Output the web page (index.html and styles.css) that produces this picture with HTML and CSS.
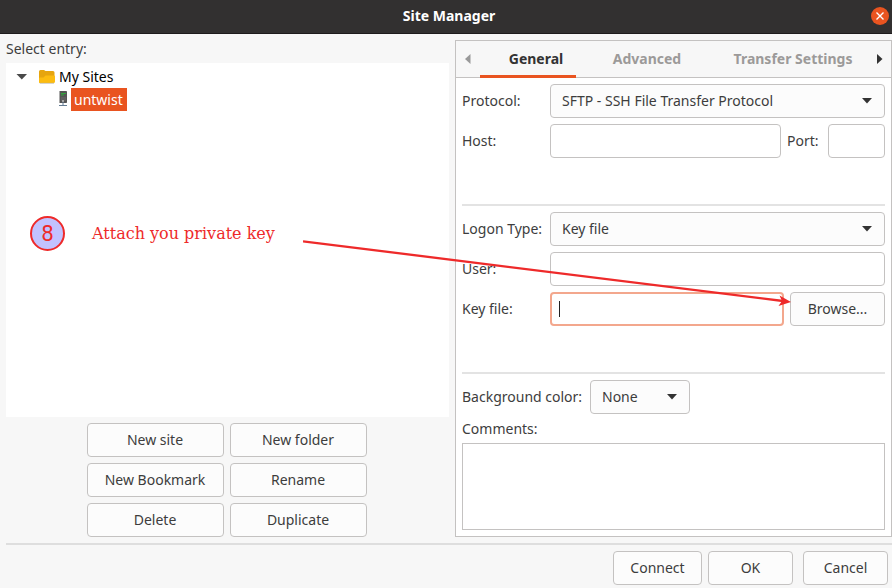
FILE: index.html
```html
<!DOCTYPE html>
<html lang="en">
<head>
<meta charset="utf-8">
<title>Site Manager</title>
<link rel="stylesheet" href="styles.css">
</head>
<body>
<header class="titlebar">
  <h1>Site Manager</h1>
  <button class="close" aria-label="Close">
    <svg viewBox="0 0 18 18" width="18" height="18"><circle cx="9" cy="9" r="9" fill="#e95420"/><path d="M5.500 5.500l7 7M12.500 5.500l-7 7" stroke="#fff" stroke-width="1.400"/></svg>
  </button>
</header>
<main class="columns">
  <section class="entries">
    <h2 class="caption">Select entry:</h2>
    <ul class="tree">
      <li class="node">
        <svg class="twisty" viewBox="0 0 11 6" width="11" height="6"><path d="M.5 0h10.500L5.800 5.500z" fill="#4a4a4a"/></svg>
        <svg class="folder" viewBox="0 0 16 14" width="16" height="14"><path d="M0 1.500Q0 0 1.500 0h3.500l1.500 1h7.500q1.500 0 1.500 1.500V12H0z" fill="#e6a50f"/><path d="M0 12.500V8.500q0-1 1.200-1H4.500L6.500 5.500H15q1 0 1 1v5q0 1.500-1.500 1.500h-13Q0 13 0 12.500z" fill="#fcbc11"/><path d="M.8 13.300h14.200" stroke="#b9b1a0" stroke-width=".7"/></svg>
        <span>My Sites</span>
      </li>
      <li class="node child">
        <svg class="server" viewBox="0 0 10 16" width="10" height="16"><rect x="1" y="0" width="8" height="12" rx=".8" fill="#555"/><path d="M1.500 0v12" stroke="#aaa"/><path d="M3 2.500h5M3 4h3" stroke="#31a53b"/><path d="M3 7h5M3 9h5" stroke="#777" stroke-width=".7"/><path d="M5 11v4M1 14.500h8" stroke="#637b91"/><path d="M5 9v2" stroke="#eee"/></svg>
        <span class="selected">untwist</span>
      </li>
    </ul>
    <div class="actions">
      <button>New site</button><button>New folder</button>
      <button>New Bookmark</button><button>Rename</button>
      <button>Delete</button><button>Duplicate</button>
    </div>
  </section>
  <section class="panel">
    <nav class="tabs" role="tablist">
      <button class="scroll" aria-label="Previous tab" disabled><svg viewBox="0 0 6 10" width="6" height="10"><path d="M5.500 0v10L0 5z" fill="#999"/></svg></button>
      <button class="tab active" role="tab" aria-selected="true">General</button>
      <button class="tab" role="tab">Advanced</button>
      <button class="tab" role="tab">Transfer Settings</button>
      <button class="scroll" aria-label="Next tab"><svg viewBox="0 0 6 10" width="6" height="10"><path d="M0 0v10L5.500 5z" fill="#333"/></svg></button>
    </nav>
    <form class="form">
      <div class="group">
        <label for="protocol">Protocol:</label>
        <select id="protocol"><option>SFTP - SSH File Transfer Protocol</option></select>
        <label for="host">Host:</label>
        <div class="pair">
          <input id="host" type="text">
          <label for="port" class="port-label">Port:</label>
          <input id="port" class="port" type="text">
        </div>
      </div>
      <hr>
      <div class="group">
        <label for="logon">Logon Type:</label>
        <select id="logon"><option>Key file</option></select>
        <label for="user">User:</label>
        <input id="user" type="text">
        <label for="keyfile">Key file:</label>
        <div class="pair">
          <input id="keyfile" class="focused" type="text">
          <button type="button" class="browse">Browse...</button>
        </div>
      </div>
      <hr>
      <div class="pair">
        <label for="color" class="wide">Background color:</label>
        <select id="color" class="color"><option>None</option></select>
      </div>
      <div class="comments">
        <label for="comments">Comments:</label>
        <textarea id="comments"></textarea>
      </div>
    </form>
  </section>
</main>
<footer class="footer">
  <button class="connect">Connect</button>
  <button>OK</button>
  <button class="cancel">Cancel</button>
</footer>
<div class="note">
  <span class="step">8</span>
  <span>Attach you private key</span>
</div>
<svg class="arrow" viewBox="0 0 490 70" width="490" height="70"><path d="M0 5.300L480 65" stroke="#ee2a2a" stroke-width="2.300"/><path d="M488 66L475.500 70L479 65L476.500 59.500z" fill="#ee2a2a"/></svg>
</body>
</html>
```
FILE: styles.css
```css
* { box-sizing: border-box; }
body {
  margin: 0;
  min-height: 100vh;
  display: flex;
  flex-direction: column;
  position: relative;
  background: #f7f7f7;
  color: #3d3d3d;
  font: 14px/20px "Noto Sans", sans-serif;
}
h1, h2, ul { margin: 0; padding: 0; font-size: inherit; }
svg { display: block; fill: none; }
button, input, select, textarea {
  font: inherit;
  color: inherit;
  margin: 0;
  border: 1px solid #c4c2c1;
  border-radius: 4px;
  background: #fcfcfc;
  height: 34px;
  min-width: 0;
}
input, textarea { background: #fff; outline: none; }
button { padding: 0; }
.titlebar {
  display: grid;
  grid-template-columns: 30px 1fr 24px;
  align-items: center;
  height: 34px;
  padding-bottom: 2px;
  background: #323030;
  border-bottom: 1px solid #1e1b1c;
  color: #fff;
}
.titlebar h1 { grid-column: 2; text-align: center; font-weight: 700; }
.close {
  display: grid;
  place-items: center;
  height: 30px;
  border: 0;
  background: none;
}
.columns {
  flex: 1;
  display: grid;
  grid-template-columns: 443fr 437fr;
  gap: 6px;
  padding: 6px 0 6px 6px;
}
.entries { display: flex; flex-direction: column; }
.caption { font-weight: 400; line-height: 18px; margin-bottom: 5px; }
.tree {
  flex: 1;
  list-style: none;
  background: #fff;
  color: #000;
  padding: 2px 10px;
}
.node { display: flex; align-items: center; height: 23px; }
.folder { margin: 0 4px 0 12px; }
.child { padding-left: 42px; }
.server { margin: 0 3px 2px 0; }
.selected { background: #e95420; color: #fff; padding: 0 4px 0 3px; line-height: 23px; }
.actions {
  display: grid;
  grid-template-columns: 137px 137px;
  justify-content: center;
  gap: 6px;
  padding: 6px 2px 0 0;
}
.panel {
  display: flex;
  flex-direction: column;
  border: 1px solid #c4c2c1;
  background: #fff;
}
.tabs {
  display: grid;
  grid-template-columns: 24px 96fr 142fr 150fr 23px;
  height: 37px;
  background: #f7f7f7;
  border-bottom: 1px solid #c4c2c1;
}
.tabs button {
  height: 37px;
  border: 0;
  border-radius: 0;
  background: none;
  padding-bottom: 2px;
}
.tab { font-weight: 700; color: #9c9a99; white-space: nowrap; }
.tabs .active {
  color: #333;
  padding: 1px 0 0 16px;
  border-bottom: 3px solid #e95420;
}
.scroll { display: grid; place-items: center; }
.form {
  flex: 1;
  display: flex;
  flex-direction: column;
  gap: 6px;
  padding: 6px;
}
.group {
  display: grid;
  grid-template-columns: 82px 1fr;
  align-items: center;
  gap: 6px;
  padding-bottom: 40px;
}
.group label { white-space: nowrap; }
.pair { display: flex; align-items: center; gap: 6px; }
.pair input { flex: 1; }
.pair .port { flex: none; width: 57px; }
.port-label { width: 35px; }
.browse { width: 95px; }
.wide { width: 122px; white-space: nowrap; }
select {
  appearance: none;
  padding: 0 11px;
  background: #fcfcfc url("data:image/svg+xml,%3Csvg xmlns='http://www.w3.org/2000/svg' width='10' height='6'%3E%3Cpath d='M0 0h10L5 5.500z' fill='%23333'/%3E%3C/svg%3E") no-repeat right 12px center;
}
.color { width: 100px; }
.focused {
  border: 2px solid #f3a78d;
  background: #fff linear-gradient(#222, #222) no-repeat 7px center / 1px 16px;
}
hr { width: 100%; height: 2px; margin: 0; border: 0; background: #e3e3e3; }
.comments {
  flex: 1;
  display: flex;
  flex-direction: column;
  gap: 5px;
  line-height: 18px;
}
textarea { flex: 1; resize: none; border-radius: 0; }
.footer {
  display: flex;
  justify-content: flex-end;
  gap: 6px;
  margin-left: 6px;
  padding: 6px 4px 3px 0;
  border-top: 2px solid #dedede;
}
.footer button { width: 85px; }
.footer .connect { width: 89px; }
.footer .cancel { margin-left: 4px; }
.note {
  position: absolute;
  left: 30px;
  top: 216px;
  display: flex;
  align-items: center;
  gap: 27px;
  color: #ee2a2a;
  font: 16px/34px "DejaVu Serif", serif;
}
.step {
  width: 35px;
  height: 35px;
  border: 2px solid #ee2a2a;
  border-radius: 50%;
  background: #c2c2ff;
  text-align: center;
  font: 22px/31px "DejaVu Sans Condensed", "DejaVu Sans", sans-serif;
}
.arrow { position: absolute; left: 303px; top: 236px; pointer-events: none; }
```
